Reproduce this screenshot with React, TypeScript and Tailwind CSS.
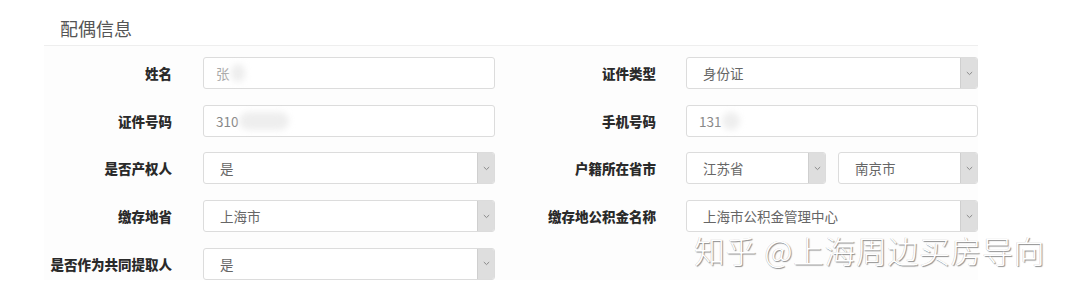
const font = { fontFamily: '"Noto Sans CJK SC", "Noto Sans", sans-serif' }

function Arrow() {
  return (
    <div className="flex h-full w-[17px] items-center justify-center border-l border-[#cfcfcf] bg-[#dedede]">
      <svg width="7" height="5" viewBox="0 0 7 5" fill="none">
        <path d="M0.8 1 L3.5 3.6 L6.2 1" stroke="#8a8a8a" strokeWidth="1" />
      </svg>
    </div>
  )
}

function TextBox({ value, blur, light }: { value: string; blur: number; light?: boolean }) {
  return (
    <div className="flex h-[32px] w-[292px] items-center rounded-[3px] border border-[#dcdcdc] bg-white pl-[12px]">
      <span className={`text-[13.5px] ${light ? 'text-[#aaa]' : 'text-[#888]'}`}>{value}</span>
      <span
        className="ml-[1px] h-[18px] rounded-full bg-[#eeeeee] blur-[3px]"
        style={{ width: blur }}
      />
    </div>
  )
}

function Select({ value, width = 292 }: { value: string; width?: number }) {
  return (
    <div
      className="flex h-[32px] items-center overflow-hidden rounded-[3px] border border-[#dcdcdc] bg-white"
      style={{ width }}
    >
      <span className="flex-1 pl-[16px] text-[13.5px] text-[#666]">{value}</span>
      <Arrow />
    </div>
  )
}

function Label({ text, w }: { text: string; w: number }) {
  return (
    <div className="shrink-0 text-right text-[13.5px] font-extrabold text-[#2a2a2a]" style={{ width: w }}>
      {text}
    </div>
  )
}

export default function App() {
  return (
    <div className="relative h-[294px] w-[1080px] overflow-hidden bg-white" style={font}>
      <div className="pl-[60px] pt-[15px] text-[18px] leading-[26px] text-[#555]">配偶信息</div>
      <div className="ml-[44px] mt-[4px] h-px w-[934px] bg-[#eeeeee]" />
      <div className="ml-[44px] w-[934px] bg-[#fdfdfd] pt-[11px]">
        <div className="-ml-[44px] flex flex-col gap-y-[15.7px]">
          <div className="flex items-center">
            <Label text="姓名" w={172} />
            <div className="ml-[31px]"><TextBox value="张" blur={14} light /></div>
            <Label text="证件类型" w={161} />
            <div className="ml-[30px]"><Select value="身份证" /></div>
          </div>
          <div className="flex items-center">
            <Label text="证件号码" w={172} />
            <div className="ml-[31px]"><TextBox value="310" blur={50} /></div>
            <Label text="手机号码" w={161} />
            <div className="ml-[30px]"><TextBox value="131" blur={18} /></div>
          </div>
          <div className="flex items-center">
            <Label text="是否产权人" w={172} />
            <div className="ml-[31px]"><Select value="是" /></div>
            <Label text="户籍所在省市" w={161} />
            <div className="ml-[30px] flex gap-[12px]">
              <Select value="江苏省" width={140} />
              <Select value="南京市" width={140} />
            </div>
          </div>
          <div className="flex items-center">
            <Label text="缴存地省" w={172} />
            <div className="ml-[31px]"><Select value="上海市" /></div>
            <Label text="缴存地公积金名称" w={161} />
            <div className="ml-[30px]"><Select value="上海市公积金管理中心" /></div>
          </div>
          <div className="flex items-center">
            <Label text="是否作为共同提取人" w={172} />
            <div className="ml-[31px]"><Select value="是" /></div>
          </div>
        </div>
      </div>
      <div className="absolute left-[694px] top-[230px] text-[31px] font-light leading-[40px] tracking-[0.5px] text-white [text-shadow:1px_1px_1px_rgba(0,0,0,0.45),-0.5px_-0.5px_0.5px_rgba(0,0,0,0.2)]">
        知乎 @上海周边买房导向
      </div>
    </div>
  )
}
